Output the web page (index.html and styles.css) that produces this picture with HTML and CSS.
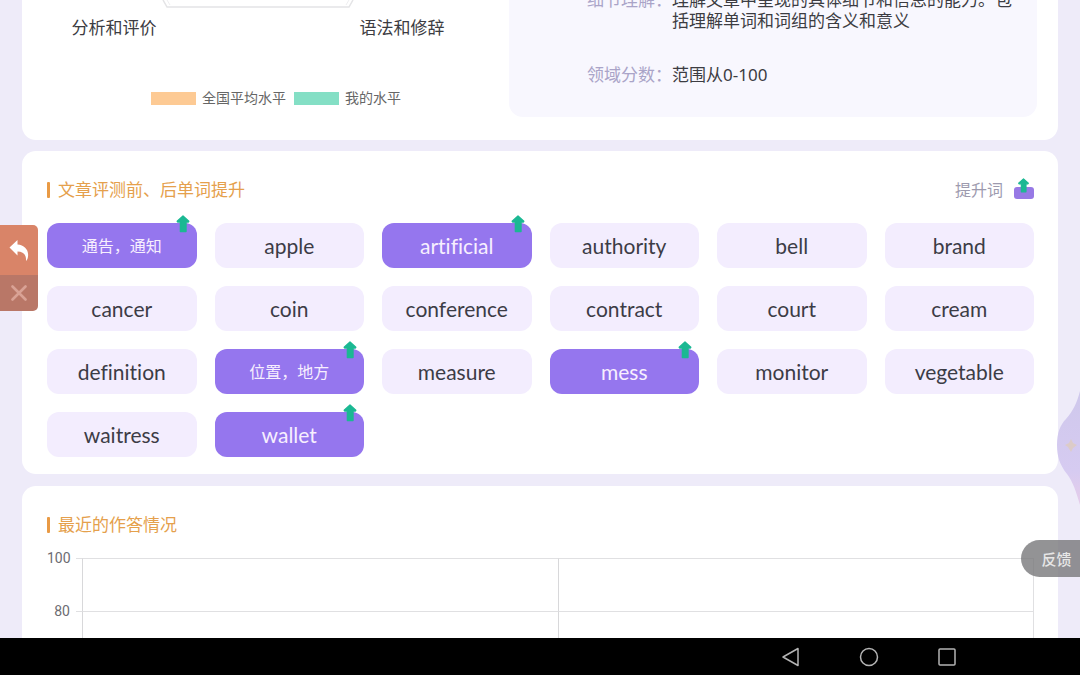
FILE: index.html
```html
<!DOCTYPE html>
<html lang="zh-CN">
<head>
    <meta charset="UTF-8">
    <meta name="viewport" content="width=device-width, initial-scale=1.0">
    <title>文章评测报告</title>
    <link rel="stylesheet" href="styles.css">
</head>
<body>
    <svg width="0" height="0" class="sprite">
        <symbol id="arrow-up" viewBox="0 0 14 18">
            <path d="M7 1 12.8 6.2 12.4 7H10V16.600H4.400V7H1.600L1.200 6.200Z" fill="#1bb893" stroke="#1bb893" stroke-width="1.4" stroke-linejoin="round"/>
        </symbol>
    </svg>

    <main class="page">
        <section class="card card-ability">
            <div class="radar">
                <svg class="radar-base" viewBox="0 0 192 10">
                    <path d="M1 0 5 7H187L191 0" fill="none" stroke="#e4e4e6" stroke-width="1.5"/>
                    <path d="M5 0 8 5M187 0 184 5" fill="none" stroke="#eeeef0"/>
                </svg>
                <div class="radar-labels">
                    <span>分析和评价</span>
                    <span>语法和修辞</span>
                </div>
                <div class="legend">
                    <span class="swatch swatch-avg"></span>
                    <span>全国平均水平</span>
                    <span class="swatch swatch-mine"></span>
                    <span>我的水平</span>
                </div>
            </div>
            <dl class="info">
                <div class="info-row">
                    <dt>细节理解：</dt>
                    <dd>理解文章中呈现的具体细节和信息的能力。包括理解单词和词组的含义和意义</dd>
                </div>
                <div class="info-row">
                    <dt>领域分数：</dt>
                    <dd>范围从0-100</dd>
                </div>
            </dl>
        </section>

        <section class="card">
            <div class="card-header">
                <h2 class="card-title">文章评测前、后单词提升</h2>
                <div class="raised-hint">
                    <span>提升词</span>
                    <span class="raised-mark"><svg><use href="#arrow-up"/></svg></span>
                </div>
            </div>
            <div class="words">
                <button class="word raised zh">通告，通知<svg><use href="#arrow-up"/></svg></button>
                <button class="word">apple</button>
                <button class="word raised">artificial<svg><use href="#arrow-up"/></svg></button>
                <button class="word">authority</button>
                <button class="word">bell</button>
                <button class="word">brand</button>
                <button class="word">cancer</button>
                <button class="word">coin</button>
                <button class="word">conference</button>
                <button class="word">contract</button>
                <button class="word">court</button>
                <button class="word">cream</button>
                <button class="word">definition</button>
                <button class="word raised zh">位置，地方<svg><use href="#arrow-up"/></svg></button>
                <button class="word">measure</button>
                <button class="word raised">mess<svg><use href="#arrow-up"/></svg></button>
                <button class="word">monitor</button>
                <button class="word">vegetable</button>
                <button class="word">waitress</button>
                <button class="word raised">wallet<svg><use href="#arrow-up"/></svg></button>
            </div>
        </section>

        <section class="card">
            <div class="card-header">
                <h2 class="card-title">最近的作答情况</h2>
            </div>
            <div class="chart">
                <div class="chart-row">
                    <span class="y-label">100</span>
                    <span class="tick"></span>
                    <span class="cell"></span>
                    <span class="cell"></span>
                </div>
                <div class="chart-row">
                    <span class="y-label">80</span>
                    <span class="tick"></span>
                    <span class="cell"></span>
                    <span class="cell"></span>
                </div>
            </div>
        </section>

        <!-- 悬浮控件 -->
        <div class="side-tools">
            <button class="tool-back" aria-label="返回">
                <svg viewBox="0 0 20 22"><path d="M0.5 8.5 8.5 1V5.5C15.500 6 20 11 19 17.500 18.800 19.500 18 21 17 22 17.500 16 14.500 12.500 8.500 12.500V16.500Z" fill="#fff"/></svg>
            </button>
            <button class="tool-close" aria-label="关闭">
                <svg viewBox="0 0 16 16"><path d="M1.500 1.500 14.500 14.500M14.500 1.500 1.500 14.500" stroke="#d9a295" stroke-width="2.600" stroke-linecap="round"/></svg>
            </button>
        </div>
        <svg class="mascot" viewBox="0 0 24 120">
            <defs>
                <linearGradient id="mascot-fill" x1="0" y1="0" x2="0" y2="1">
                    <stop offset="0" stop-color="#cfc8ec"/>
                    <stop offset="0.7" stop-color="#d6cbf1"/>
                    <stop offset="1" stop-color="#e6cdea"/>
                </linearGradient>
            </defs>
            <path d="M24 4C21 16 17 24 10 32C4 38 1 46 1 58C1 70 4 78 11 87C17 95 20 104 24 118Z" fill="url(#mascot-fill)"/>
            <path d="M15 52 17 56 21 58 17 61 15 65 12 60 9 58 13 56Z" fill="#dccbc8"/>
        </svg>
        <button class="feedback">反馈</button>
    </main>

    <nav class="system-nav">
        <button aria-label="返回上一页"><svg viewBox="0 0 20 20"><path d="M17 1.500V18.500L2 10Z"/></svg></button>
        <button aria-label="主屏幕"><svg viewBox="0 0 20 20"><circle cx="10" cy="10" r="8.500"/></svg></button>
        <button aria-label="最近任务"><svg viewBox="0 0 20 20"><rect x="2" y="2" width="16" height="16" rx="1"/></svg></button>
    </nav>
</body>
</html>
```
FILE: styles.css
```css
* {
    margin: 0;
    padding: 0;
    box-sizing: border-box;
}

body {
    display: flex;
    flex-direction: column;
    height: 100vh;
    overflow: hidden;
    font-family: Lato, "Noto Sans CJK SC", sans-serif;
    font-size: 17px;
    font-variant-ligatures: none;
    color: #3c3c42;
    background: #eeebf9;
}

button {
    border: none;
    background: none;
    font: inherit;
    font-variant-ligatures: none;
    cursor: pointer;
}

.sprite {
    position: absolute;
}

.page {
    position: relative;
    flex: 1;
    min-height: 0;
    overflow: hidden;
    padding: 0 22px;
}

.card {
    background: #fff;
    border-radius: 14px;
    padding: 27px 24px 17px 25px;
    margin-bottom: 12px;
}

/* 能力雷达图 */
.card-ability {
    display: flex;
    align-items: flex-end;
    height: 140px;
    margin-bottom: 11px;
    padding: 0 21px 23px;
    overflow: hidden;
    border-radius: 0 0 14px 14px;
}

.radar {
    flex: 1;
    display: flex;
    flex-direction: column;
    align-items: center;
    padding-right: 36px;
}

.radar-base {
    width: 192px;
    height: 10px;
    margin-bottom: 6px;
}

.radar-labels {
    display: flex;
    gap: 203px;
    line-height: 24px;
    margin-bottom: 48px;
}

.legend {
    display: flex;
    align-items: center;
    gap: 6px;
    font-size: 14px;
    line-height: 20px;
    padding-bottom: 9px;
    margin-left: 36px;
    color: #666;
}

.swatch {
    width: 45px;
    height: 13px;
}

.swatch-avg {
    background: #fdca94;
}

.swatch-mine {
    background: #84dfc5;
    margin-left: 2px;
}

.info {
    width: 528px;
    padding: 32px 24px 32px 78px;
    border-radius: 14px;
    background: #f8f7fe;
    font-family: "Noto Sans", "Noto Sans CJK SC", sans-serif;
}

.info-row {
    display: flex;
    line-height: 21px;
}

.info-row + .info-row {
    margin-top: 33px;
}

.info dt {
    flex: none;
    color: #aaa4c8;
}

/* 卡片标题 */
.card-header {
    display: flex;
    justify-content: space-between;
    align-items: center;
    height: 24px;
    margin-bottom: 21px;
}

.card-title {
    display: flex;
    align-items: center;
    gap: 8px;
    font-size: 17px;
    font-weight: normal;
    line-height: 24px;
    color: #e5a04c;
}

.card-title::before {
    content: "";
    width: 3px;
    height: 16px;
    border-radius: 1px;
    background: #e99a45;
}

.raised-hint {
    display: flex;
    align-items: center;
    gap: 11px;
    font-size: 16px;
    line-height: 24px;
    color: #9d9aae;
}

.raised-mark {
    position: relative;
    width: 20px;
    height: 12px;
    margin-top: 6px;
    border-radius: 3px;
    background: #9779e5;
}

.raised-mark svg {
    position: absolute;
    top: -9px;
    left: 3px;
    width: 13px;
    height: 15px;
}

/* 单词 */
.words {
    display: grid;
    grid-template-columns: repeat(6, 1fr);
    gap: 18px;
}

.word {
    position: relative;
    height: 45px;
    border-radius: 12px;
    background: #f3edfe;
    font-size: 21px;
    line-height: 24px;
    color: #3c3c46;
}

.word.raised {
    background: #9576ee;
    color: #f7effe;
}

.word.zh {
    font-size: 16px;
}

.word svg {
    position: absolute;
    top: -8px;
    right: 7px;
    width: 14px;
    height: 18px;
}

/* 作答情况图表 */
.chart-row {
    display: flex;
    height: 53px;
}

.y-label {
    width: 23px;
    margin-right: 6px;
    margin-top: -10px;
    font-family: Roboto, sans-serif;
    font-size: 14px;
    line-height: 20px;
    text-align: right;
    color: #6c6c72;
}

.tick {
    width: 6px;
    border-top: 1px solid #e0e0e2;
}

.cell {
    flex: 1;
    border-top: 1px solid #e0e0e2;
    border-left: 1px solid #d8d8da;
}

.cell:last-child {
    border-right: 1px solid #e0e0e2;
}

/* 悬浮控件 */
.side-tools {
    position: absolute;
    top: 225px;
    left: 0;
    width: 38px;
    border-radius: 0 5px 5px 0;
    overflow: hidden;
}

.side-tools button {
    display: flex;
    align-items: center;
    justify-content: center;
    width: 100%;
}

.tool-back {
    height: 50px;
    background: #d98468;
}

.tool-back svg {
    width: 20px;
    height: 22px;
}

.tool-close {
    height: 36px;
    background: #b97767;
}

.tool-close svg {
    width: 16px;
    height: 16px;
}

.mascot {
    position: absolute;
    top: 387px;
    right: 0;
    width: 24px;
    height: 120px;
}

.feedback {
    position: absolute;
    top: 540px;
    right: 0;
    width: 59px;
    height: 37px;
    padding-left: 12px;
    border-radius: 19px 0 0 19px;
    background: rgba(120, 120, 122, 0.8);
    color: #e6e6e6;
    font-size: 15px;
    font-weight: 500;
    line-height: 20px;
}

/* 系统导航栏 */
.system-nav {
    flex: none;
    display: flex;
    justify-content: flex-end;
    align-items: center;
    gap: 58px;
    height: 37px;
    padding-right: 123px;
    background: #000;
}

.system-nav button {
    width: 20px;
    height: 20px;
}

.system-nav svg {
    display: block;
    width: 20px;
    height: 20px;
    fill: none;
    stroke: #b4b4b4;
    stroke-width: 1.5;
    stroke-linejoin: round;
}
```
